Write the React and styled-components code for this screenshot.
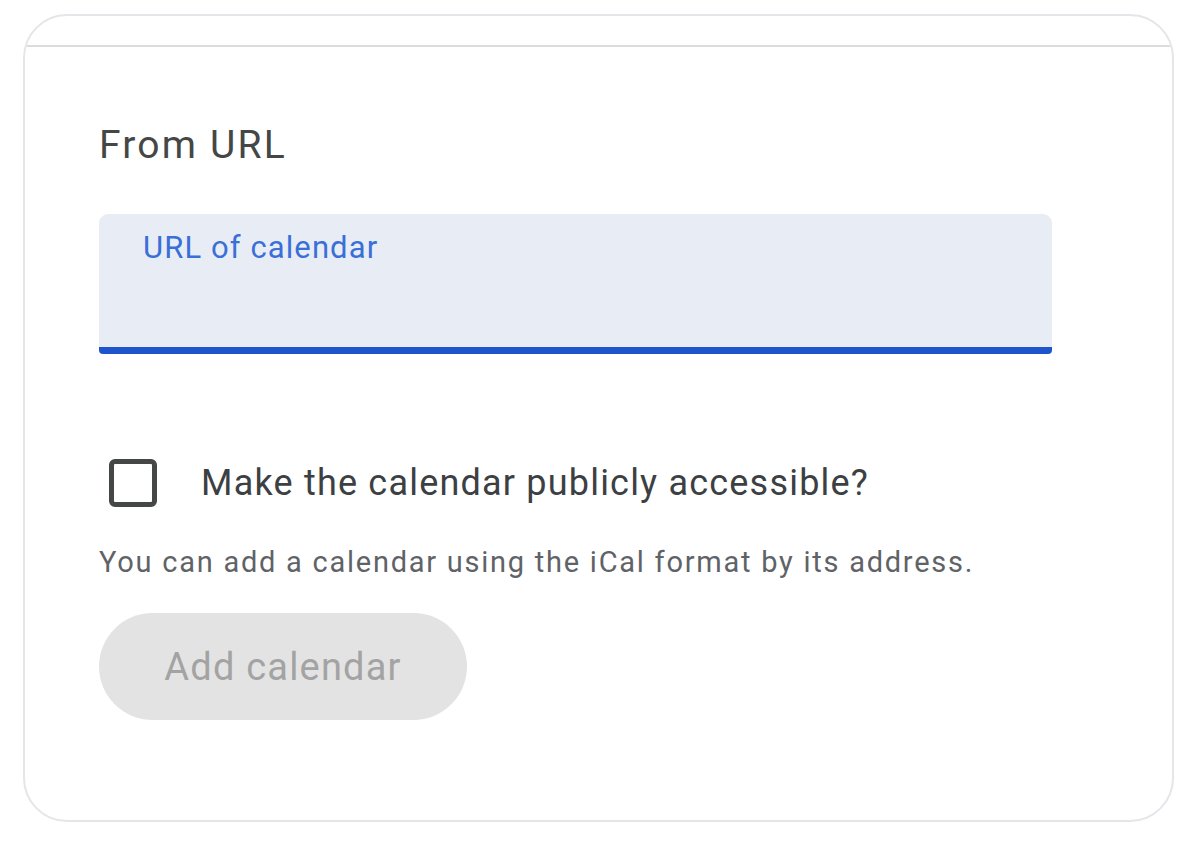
import React from "react";
import styled, { createGlobalStyle } from "styled-components";

const GlobalStyle = createGlobalStyle`
  html, body {
    margin: 0;
    padding: 0;
    background: #ffffff;
  }
  body {
    font-family: Roboto, "Noto Sans", Arial, sans-serif;
  }
`;

const Page = styled.div`
  padding: 14px 12px 0 23px;
`;

const Card = styled.div`
  width: 1151px;
  height: 808px;
  box-sizing: border-box;
  border: 2px solid #e5e5ea;
  border-radius: 44px;
  overflow: hidden;
  background: #fff;
`;

const Divider = styled.div`
  margin-top: 29px;
  height: 2px;
  background: #dcdcdc;
`;

const Body = styled.div`
  padding: 74px 0 0 74px;
  display: flex;
  flex-direction: column;
`;

const Title = styled.h2`
  margin: 0;
  font-size: 39px;
  font-weight: 400;
  line-height: 48px;
  letter-spacing: 2.2px;
  color: #444746;
`;

const Field = styled.div`
  margin-top: 45px;
  width: 953px;
  height: 140px;
  box-sizing: border-box;
  background: #e8edf5;
  border-radius: 9px 9px 4px 4px;
  border-bottom: 7px solid #1f55cc;
  padding: 14px 0 0 44px;
`;

const Placeholder = styled.div`
  font-size: 31px;
  line-height: 40px;
  letter-spacing: 1.1px;
  color: #3a6fd8;
`;

const CheckRow = styled.label`
  margin-top: 105px;
  display: flex;
  align-items: center;
  gap: 44px;
  padding-left: 10px;
`;

const Box = styled.span`
  width: 48px;
  height: 48px;
  box-sizing: border-box;
  border: 5px solid #444746;
  border-radius: 6px;
  flex-shrink: 0;
`;

const CheckLabel = styled.span`
  font-size: 36px;
  line-height: 48px;
  letter-spacing: 1.2px;
  color: #3c4043;
`;

const Helper = styled.p`
  margin: 37px 0 0;
  font-size: 29px;
  line-height: 36px;
  letter-spacing: 1.75px;
  color: #5f6368;
`;

const Button = styled.button`
  margin-top: 33px;
  width: 368px;
  height: 107px;
  border: none;
  border-radius: 54px;
  background: #e3e3e3;
  color: #a3a3a3;
  font-family: inherit;
  font-size: 38px;
  letter-spacing: 1.2px;
  cursor: default;
`;

export default function App() {
  return (
    <>
      <GlobalStyle />
      <Page>
        <Card>
          <Divider />
          <Body>
            <Title>From URL</Title>
            <Field>
              <Placeholder>URL of calendar</Placeholder>
            </Field>
            <CheckRow>
              <Box />
              <CheckLabel>Make the calendar publicly accessible?</CheckLabel>
            </CheckRow>
            <Helper>You can add a calendar using the iCal format by its address.</Helper>
            <Button disabled>Add calendar</Button>
          </Body>
        </Card>
      </Page>
    </>
  );
}
